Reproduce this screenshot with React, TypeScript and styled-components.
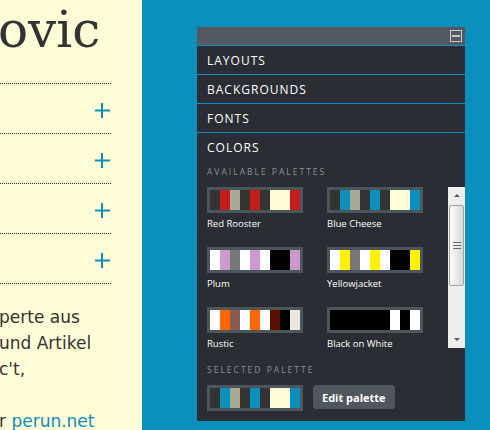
import styled, { createGlobalStyle } from 'styled-components';

const GlobalStyle = createGlobalStyle`
  html, body {
    margin: 0;
    padding: 0;
  }
  body {
    background: #0b8fbc;
  }
`;

const palettes = [
  {
    name: 'Red Rooster',
    colors: ['#333333', '#c41b1b', '#aaa993', '#333333', '#c41b1b', '#333333', '#fffcd8', '#fffcd8', '#c41b1b'],
  },
  {
    name: 'Blue Cheese',
    colors: ['#333333', '#0b8fbc', '#aaa993', '#333333', '#0b8fbc', '#333333', '#fffcd8', '#fffcd8', '#0b8fbc'],
  },
  {
    name: 'Plum',
    colors: ['#ffffff', '#cc99cc', '#777777', '#ffffff', '#cc99cc', '#ffffff', '#000000', '#000000', '#cc99cc'],
  },
  {
    name: 'Yellowjacket',
    colors: ['#ffffff', '#fff200', '#777777', '#ffffff', '#fff200', '#ffffff', '#000000', '#000000', '#fff200'],
  },
  {
    name: 'Rustic',
    colors: ['#ffffff', '#ff6600', '#8c5a4f', '#ffffff', '#ff6600', '#ffffff', '#5a1000', '#000000', '#ebe7df'],
  },
  {
    name: 'Black on White',
    colors: ['#000000', '#000000', '#000000', '#000000', '#000000', '#000000', '#ffffff', '#000000', '#ffffff'],
  },
];

const sections = ['Layouts', 'Backgrounds', 'Fonts'];

const Swatch = ({ colors }: { colors: string[] }) => (
  <SwatchBox>
    {colors.map((c, i) => (
      <Stripe key={i} $color={c} />
    ))}
  </SwatchBox>
);

const PlusIcon = () => (
  <svg width="15" height="15" viewBox="0 0 15 15">
    <rect x="6" y="0" width="2" height="15" fill="#0b8fbc" />
    <rect x="0" y="6.5" width="15" height="2" fill="#0b8fbc" />
  </svg>
);

const App = () => {
  return (
    <Page>
      <GlobalStyle />
      <LeftColumn>
        <Heading>ovic</Heading>
        <AccordionList>
          {[0, 1, 2, 3].map((i) => (
            <AccordionRow key={i}>
              <PlusIcon />
            </AccordionRow>
          ))}
        </AccordionList>
        <BodyText>
          perte aus
          <br />
          und Artikel
          <br />
          c't,
          <br />
          <br />
          r <a href="#">perun.net</a>
        </BodyText>
      </LeftColumn>

      <Stage>
        <Panel>
          <PanelBar>
            <MinButton />
          </PanelBar>
          {sections.map((s) => (
            <SectionTitle key={s}>{s}</SectionTitle>
          ))}
          <SectionTitle>Colors</SectionTitle>
          <ColorsBody>
            <SubLabel>Available palettes</SubLabel>
            <PaletteArea>
              <PaletteList>
                {palettes.map((p) => (
                  <PaletteItem key={p.name}>
                    <Swatch colors={p.colors} />
                    <PaletteName>{p.name}</PaletteName>
                  </PaletteItem>
                ))}
              </PaletteList>
              <ScrollTrack>
                <ScrollArrow $dir="up" />
                <ScrollThumb>
                  <Grip />
                </ScrollThumb>
                <ScrollSpacer />
                <ScrollArrow $dir="down" />
              </ScrollTrack>
            </PaletteArea>
            <SubLabel $gap={16}>Selected palette</SubLabel>
            <SelectedRow>
              <Swatch colors={palettes[1].colors} />
              <EditButton>Edit palette</EditButton>
            </SelectedRow>
          </ColorsBody>
        </Panel>
      </Stage>
    </Page>
  );
};

const Page = styled.div`
  display: flex;
  width: 490px;
  height: 430px;
  overflow: hidden;
`;

const LeftColumn = styled.div`
  width: 142px;
  flex-shrink: 0;
  background: #fffcd8;
  color: #333333;
  overflow: hidden;
  padding-right: 31px;
  box-sizing: border-box;
`;

const Heading = styled.h1`
  margin: 5px 0 0 -2px;
  font-family: 'DejaVu Serif', serif;
  font-weight: normal;
  font-size: 50px;
  line-height: 50px;
  white-space: nowrap;
`;

const AccordionList = styled.div`
  margin-top: 28px;
  border-bottom: 1px dotted #333333;
`;

const AccordionRow = styled.div`
  height: 46px;
  border-top: 1px dotted #333333;
  display: flex;
  align-items: center;
  justify-content: flex-end;
  padding: 3px 1px 0 0;
`;

const BodyText = styled.p`
  margin: 20px 0 0 -1px;
  font-family: 'DejaVu Sans', sans-serif;
  font-size: 17px;
  line-height: 26px;
  white-space: nowrap;

  a {
    color: #0b8fbc;
    text-decoration: none;
  }
`;

const Stage = styled.div`
  flex: 1;
  background: #0b8fbc;
  padding: 27px 0 0 55px;
`;

const Panel = styled.div`
  width: 268px;
  background: #2a2d33;
  color: #ffffff;
  font-family: 'Open Sans', sans-serif;
`;

const PanelBar = styled.div`
  height: 18px;
  background: #525960;
  display: flex;
  align-items: center;
  justify-content: flex-end;
  padding-right: 3px;
`;

const MinButton = styled.span`
  width: 12px;
  height: 12px;
  box-sizing: border-box;
  border: 1px solid #c8c8c8;
  display: flex;
  align-items: center;
  justify-content: center;

  &::after {
    content: '';
    width: 8px;
    height: 2px;
    background: #c8c8c8;
  }
`;

const SectionTitle = styled.div`
  height: 28px;
  border-top: 1px solid #0b8fbc;
  padding-left: 10px;
  display: flex;
  align-items: center;
  font-size: 12px;
  letter-spacing: 1px;
  text-transform: uppercase;
`;

const ColorsBody = styled.div`
  padding: 0 0 10px 10px;
`;

const SubLabel = styled.div<{ $gap?: number }>`
  margin-top: ${({ $gap }) => $gap ?? 5}px;
  font-size: 8.5px;
  line-height: 12px;
  letter-spacing: 2px;
  text-transform: uppercase;
  color: #8d9196;
`;

const PaletteArea = styled.div`
  display: flex;
  height: 161px;
  margin-top: 9px;
`;

const PaletteList = styled.div`
  flex: 1;
  display: grid;
  grid-template-columns: 96px 96px;
  column-gap: 24px;
  row-gap: 17px;
  align-content: start;
`;

const PaletteItem = styled.div`
  display: flex;
  flex-direction: column;
`;

const SwatchBox = styled.div`
  display: flex;
  width: 96px;
  height: 26px;
  padding: 3px;
  box-sizing: border-box;
  background: #4c545c;
`;

const Stripe = styled.span<{ $color: string }>`
  width: 10px;
  height: 100%;
  background: ${({ $color }) => $color};
`;

const PaletteName = styled.div`
  margin-top: 5px;
  font-size: 9.5px;
  line-height: 12px;
  white-space: nowrap;
`;

const ScrollTrack = styled.div`
  width: 17px;
  background: #efefef;
  display: flex;
  flex-direction: column;
  align-items: center;
`;

const ScrollArrow = styled.div<{ $dir: 'up' | 'down' }>`
  height: 17px;
  width: 100%;
  flex-shrink: 0;
  display: flex;
  align-items: center;
  justify-content: center;

  &::before {
    content: '';
    border-left: 3px solid transparent;
    border-right: 3px solid transparent;
    ${({ $dir }) =>
      $dir === 'up' ? 'border-bottom: 3px solid #5a5a5a;' : 'border-top: 3px solid #5a5a5a;'}
  }
`;

const ScrollThumb = styled.div`
  margin-top: 1px;
  width: 15px;
  height: 81px;
  box-sizing: border-box;
  border: 1px solid #a3a3a3;
  border-radius: 2px;
  background: linear-gradient(to right, #fbfbfb, #e6e6e6 60%, #d6d6d6);
  display: flex;
  align-items: center;
  justify-content: center;
`;

const Grip = styled.span`
  width: 8px;
  height: 7px;
  background: repeating-linear-gradient(to bottom, #6a6a6a 0 1px, transparent 1px 3px);
`;

const ScrollSpacer = styled.div`
  flex: 1;
`;

const SelectedRow = styled.div`
  display: flex;
  align-items: flex-start;
  gap: 10px;
  margin-top: 9px;
`;

const EditButton = styled.button`
  height: 24px;
  padding: 0 9px;
  border: none;
  border-radius: 3px;
  background: #4f565e;
  color: #ffffff;
  font-family: 'Open Sans', sans-serif;
  font-weight: bold;
  font-size: 11px;
`;

export default App;
